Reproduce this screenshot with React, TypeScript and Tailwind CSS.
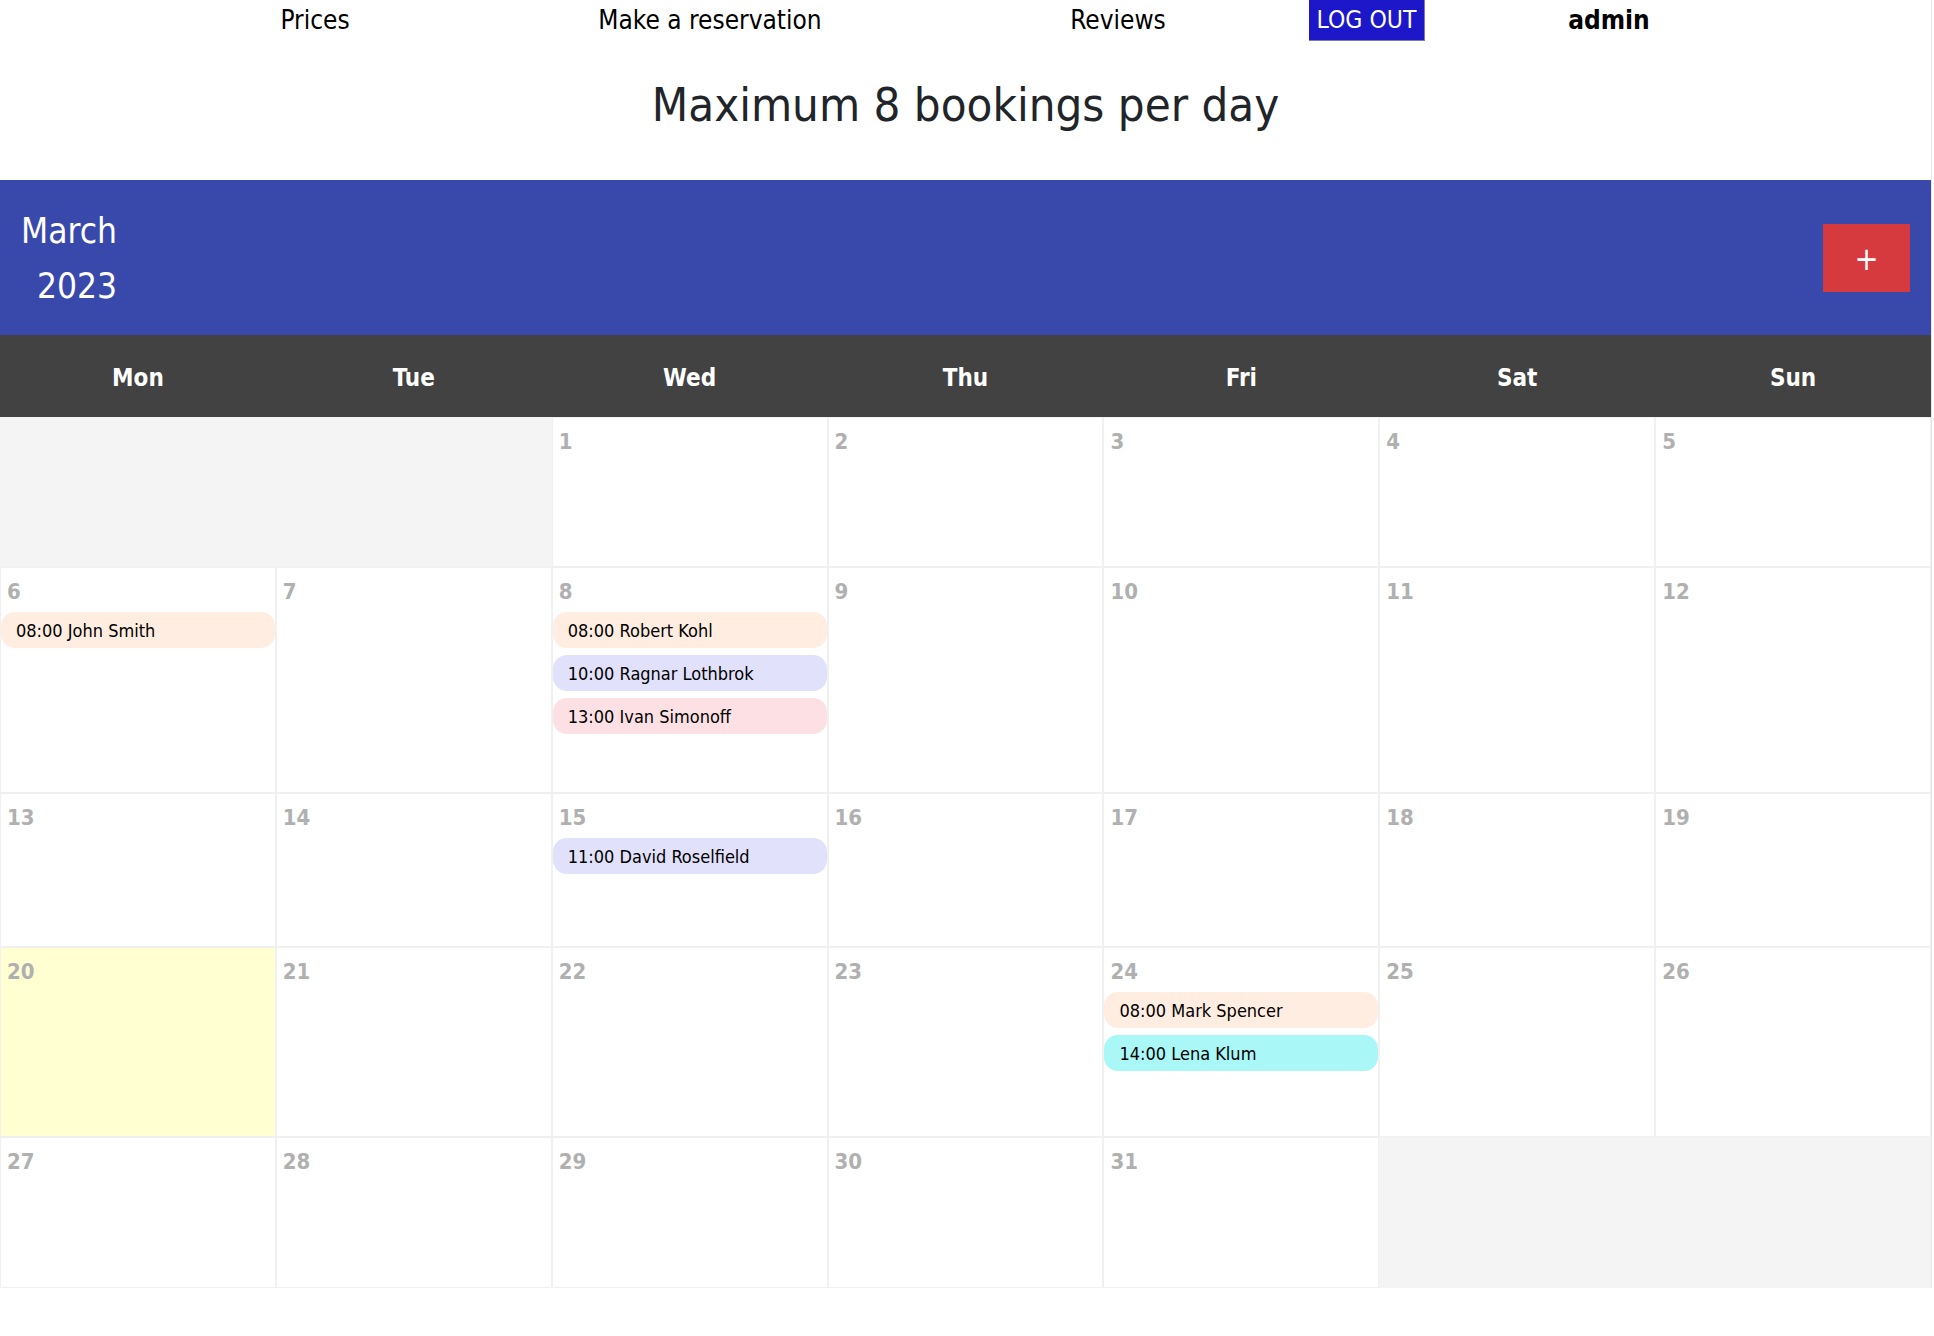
import React from 'react';

type Booking = { time: string; name: string; color: string };

const bookings: Record<number, Booking[]> = {
  6: [{ time: '08:00', name: 'John Smith', color: 'bg-[#ffede2]' }],
  8: [
    { time: '08:00', name: 'Robert Kohl', color: 'bg-[#ffede2]' },
    { time: '10:00', name: 'Ragnar Lothbrok', color: 'bg-[#e1e1fb]' },
    { time: '13:00', name: 'Ivan Simonoff', color: 'bg-[#fde0e3]' },
  ],
  15: [{ time: '11:00', name: 'David Roselfield', color: 'bg-[#e1e1fb]' }],
  24: [
    { time: '08:00', name: 'Mark Spencer', color: 'bg-[#ffede2]' },
    { time: '14:00', name: 'Lena Klum', color: 'bg-[#aaf7f7]' },
  ],
};

const weekDays = ['Mon', 'Tue', 'Wed', 'Thu', 'Fri', 'Sat', 'Sun'];

// March 2023 starts on a Wednesday
const cells: (number | null)[] = [
  null, null,
  ...Array.from({ length: 31 }, (_, i) => i + 1),
  null, null,
];

const TODAY = 20;

const DayCell = ({ day }: { day: number | null }) => {
  if (day === null) {
    return <div className="bg-[#f4f4f4]" />;
  }
  const list = bookings[day] ?? [];
  return (
    <div
      className={`border border-[#f0f0f0] ${day === TODAY ? 'bg-[#ffffd2]' : 'bg-white'}`}
    >
      <div className="pl-[6px] pt-[13px] text-[22px] font-bold leading-[22px] text-[#b0b0b0]">
        {day}
      </div>
      {list.length > 0 && (
        <div className="mt-[9px] flex flex-col gap-[7px]">
          {list.map((b) => (
            <div
              key={b.time + b.name}
              className={`flex h-[36px] items-center rounded-[14px] pl-[15px] text-[18px] text-black ${b.color}`}
            >
              {b.time} {b.name}
            </div>
          ))}
        </div>
      )}
    </div>
  );
};

export default function App() {
  return (
    <div className="min-h-[1336px] w-[1934px] bg-white font-['DejaVu_Sans_Condensed','DejaVu_Sans',sans-serif]">
      <div className="w-[1932px] border-r border-[#e6e6e6]">
        {/* top nav */}
        <nav className="flex h-[41px] items-center pl-[215px] text-[26px] text-black">
          <div className="w-[200px] text-center">Prices</div>
          <div className="w-[590px] text-center">Make a reservation</div>
          <div className="w-[226px] text-center">Reviews</div>
          <div className="flex w-[272px] justify-center self-stretch">
            <button className="h-full w-[116px] border-b border-r border-[#7c7c9c] bg-[#1c17c8] text-[24.5px] text-white">
              LOG OUT
            </button>
          </div>
          <div className="w-[212px] text-center font-bold">admin</div>
        </nav>

        <div className="h-[139px] pt-[40px]">
          <h1 className="text-center text-[47px] leading-[48px] text-[#212529]">
            Maximum 8 bookings per day
          </h1>
        </div>

        {/* month header */}
        <div className="flex h-[155px] items-center justify-between bg-[#3949ab]">
          <div className="w-[117px] pt-[3px] text-right text-[35px] leading-[55px] text-white">
            <div>March</div>
            <div>2023</div>
          </div>
          <button className="mr-[21px] flex h-[68px] w-[87px] items-center justify-center bg-[#d63a3e] pt-[2px] text-[32px] leading-none text-white">
            +
          </button>
        </div>

        {/* weekdays */}
        <div className="grid h-[82px] grid-cols-7 items-center bg-[#424242] pt-[4px] text-center text-[24px] font-bold text-white">
          {weekDays.map((d) => (
            <div key={d}>{d}</div>
          ))}
        </div>

        {/* days */}
        <div className="grid grid-cols-7 grid-rows-[150px_226px_154px_190px_151px]">
          {cells.map((day, i) => (
            <DayCell key={i} day={day} />
          ))}
        </div>
      </div>
    </div>
  );
}
